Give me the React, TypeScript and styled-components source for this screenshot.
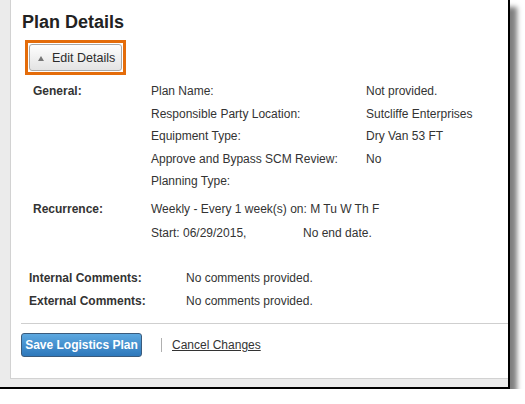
import React from "react";
import styled, { createGlobalStyle } from "styled-components";

const Global = createGlobalStyle`
  html, body { margin: 0; padding: 0; background: #ffffff; }
  body { font-family: Arial, "Liberation Sans", Helvetica, sans-serif; font-size: 12px; color: #333; }
`;

const Frame = styled.div`
  box-sizing: border-box;
  width: 510px;
  height: 389px;
  background: #ebebeb;
  border-right: 2px solid #000;
  border-bottom: 2px solid #000;
  padding: 0 0 8px 10px;
  box-shadow: 7px 7px 5px rgba(0, 0, 0, 0.5);
`;

const Panel = styled.div`
  box-sizing: border-box;
  height: 100%;
  background: #fff;
  border-left: 1px solid #d2d2d2;
  border-bottom: 1px solid #d2d2d2;
  display: flex;
  flex-direction: column;
  align-items: flex-start;
`;

const Title = styled.h1`
  margin: 0;
  padding: 12px 0 0 11px;
  font-size: 18px;
  line-height: 21px;
  font-weight: bold;
  color: #222;
`;

const Highlight = styled.div`
  margin: 7px 0 0 14px;
  border: 3px solid #e46c0a;
  padding: 1px;
  display: flex;
`;

const EditButton = styled.button`
  box-sizing: border-box;
  width: 93px;
  height: 27px;
  margin: 0;
  padding: 0 0 0 8px;
  border: 1px solid #a8a8a8;
  border-radius: 3px;
  background: linear-gradient(#fefefe, #e3e3e3);
  font-family: inherit;
  font-size: 12.5px;
  color: #2b2b2b;
  display: flex;
  align-items: center;
  gap: 8px;
`;

const Caret = styled.span`
  width: 0;
  height: 0;
  border-left: 3px solid transparent;
  border-right: 3px solid transparent;
  border-bottom: 5px solid #777;
  margin-top: 1px;
`;

const Section = styled.div<{ $top: number; $indent: number; $labelWidth: number; $line: number }>`
  margin-top: ${(p) => p.$top}px;
  padding-left: ${(p) => p.$indent}px;
  display: grid;
  grid-template-columns: ${(p) => p.$labelWidth}px 1fr;
  line-height: ${(p) => p.$line}px;
  align-self: stretch;
`;

const Label = styled.div`
  font-weight: bold;
  color: #333;
`;

const Fields = styled.div`
  display: grid;
  grid-template-columns: 215px 1fr;
`;

const Lines = styled.div`
  display: flex;
  flex-direction: column;
`;

const StartPart = styled.span`
  display: inline-block;
  width: 152px;
`;

const Separator = styled.hr`
  align-self: stretch;
  margin: 10px 0 0 10px;
  border: 0;
  border-top: 1px solid #cfcfcf;
  height: 0;
`;

const Footer = styled.div`
  margin: 9px 0 0 10px;
  display: flex;
  align-items: center;
`;

const SaveButton = styled.button`
  box-sizing: border-box;
  width: 121px;
  height: 24px;
  margin: 0;
  padding: 0;
  border: 1px solid #3a5b7c;
  border-radius: 3px;
  background: linear-gradient(#5ca8e0, #2e78bb);
  color: #fff;
  font-family: inherit;
  font-size: 12px;
  font-weight: bold;
`;

const Divider = styled.span`
  width: 1px;
  height: 14px;
  background: #b0b0b0;
  margin: 0 10px 0 19px;
`;

const CancelLink = styled.a`
  color: #333;
  text-decoration: underline;
  font-size: 12px;
`;

const general: [string, string][] = [
  ["Plan Name:", "Not provided."],
  ["Responsible Party Location:", "Sutcliffe Enterprises"],
  ["Equipment Type:", "Dry Van 53 FT"],
  ["Approve and Bypass SCM Review:", "No"],
  ["Planning Type:", ""],
];

export default function App() {
  return (
    <>
      <Global />
      <Frame>
        <Panel>
          <Title>Plan Details</Title>
          <Highlight>
            <EditButton>
              <Caret />
              Edit Details
            </EditButton>
          </Highlight>
          <Section $top={5} $indent={22} $labelWidth={118} $line={22.5}>
            <Label>General:</Label>
            <Fields>
              {general.map(([k, v]) => (
                <React.Fragment key={k}>
                  <div>{k}</div>
                  <div>{v}</div>
                </React.Fragment>
              ))}
            </Fields>
          </Section>
          <Section $top={4} $indent={22} $labelWidth={118} $line={24}>
            <Label>Recurrence:</Label>
            <Lines>
              <div>Weekly - Every 1 week(s) on: M Tu W Th F</div>
              <div>
                <StartPart>Start: 06/29/2015,</StartPart>No end date.
              </div>
            </Lines>
          </Section>
          <Section $top={22} $indent={18} $labelWidth={157} $line={23}>
            <Lines>
              <Label>Internal Comments:</Label>
              <Label>External Comments:</Label>
            </Lines>
            <Lines>
              <div>No comments provided.</div>
              <div>No comments provided.</div>
            </Lines>
          </Section>
          <Separator />
          <Footer>
            <SaveButton>Save Logistics Plan</SaveButton>
            <Divider />
            <CancelLink href="#">Cancel Changes</CancelLink>
          </Footer>
        </Panel>
      </Frame>
    </>
  );
}
